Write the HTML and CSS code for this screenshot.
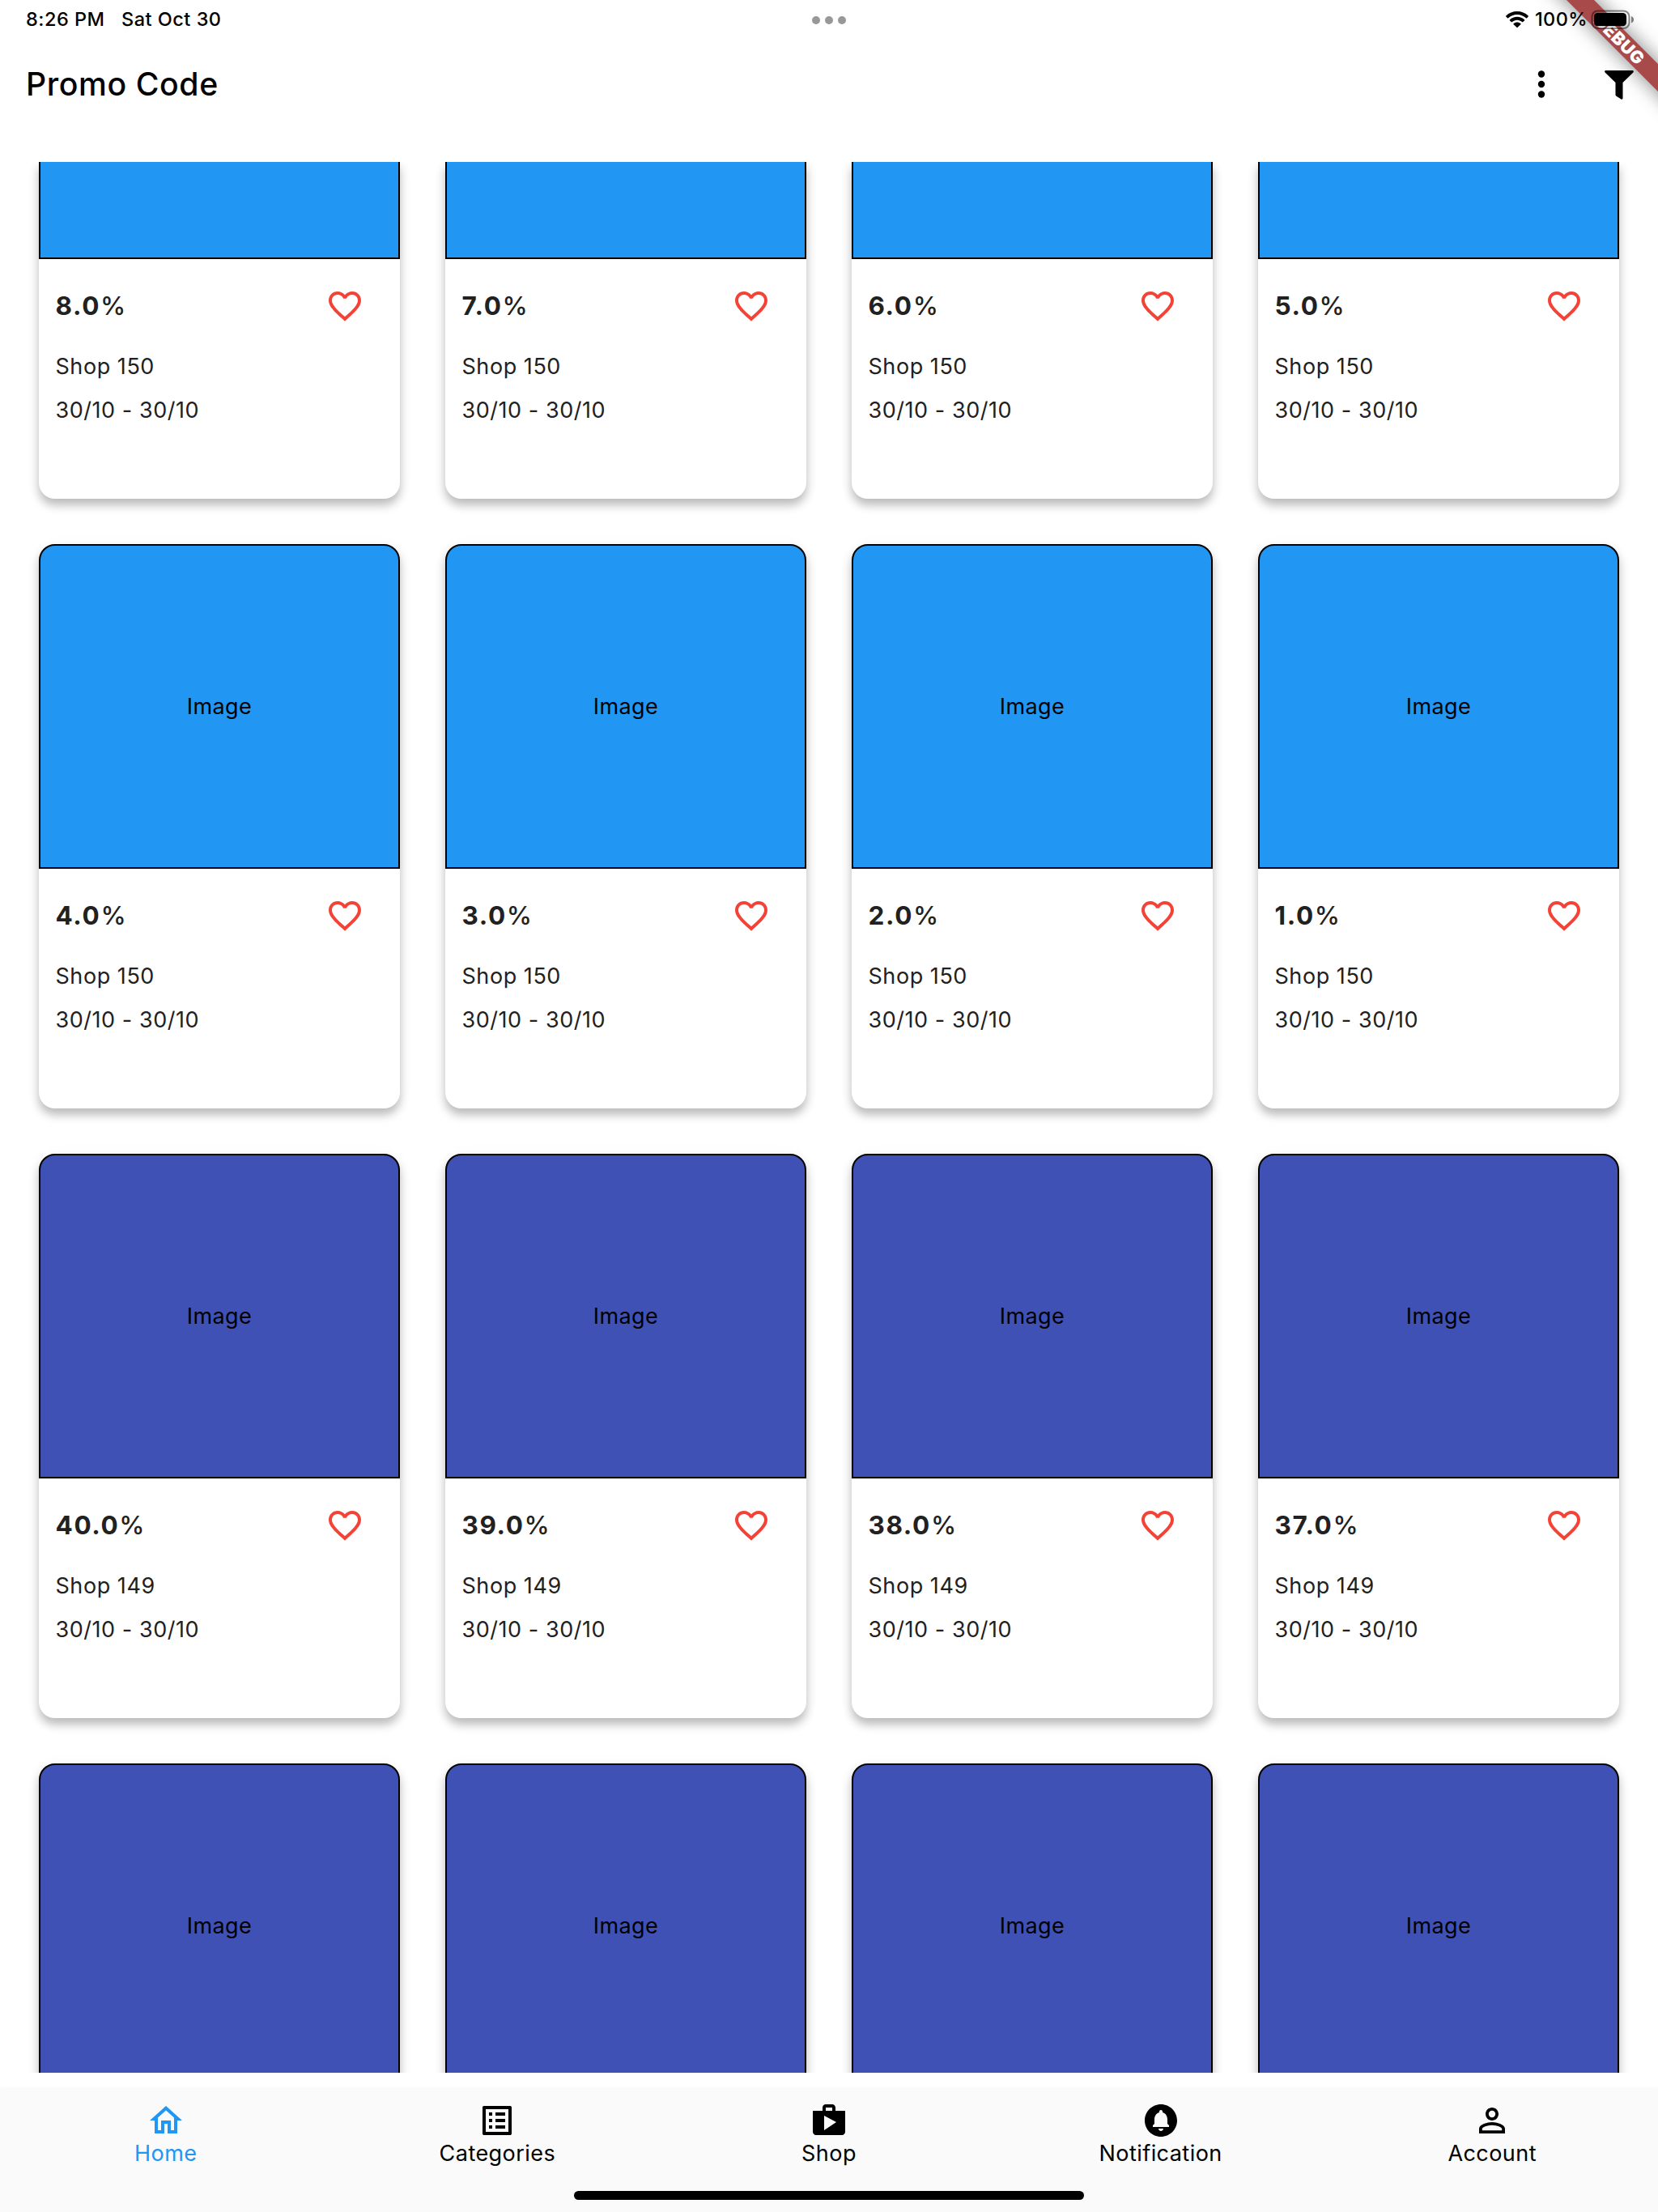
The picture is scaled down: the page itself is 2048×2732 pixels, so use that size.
FILE: index.html
```html
<!DOCTYPE html>
<html lang="en">
<head>
<meta charset="utf-8">
<title>Promo Code</title>
<link rel="stylesheet" href="styles.css">
</head>
<body>
<svg class="sprite" aria-hidden="true">
  <symbol id="heart" viewBox="0 0 24 24"><path d="M16.5 3c-1.74 0-3.41.81-4.5 2.09C10.91 3.81 9.24 3 7.5 3 4.42 3 2 5.42 2 8.5c0 3.78 3.4 6.86 8.55 11.54L12 21.35l1.45-1.32C18.6 15.36 22 12.28 22 8.5 22 5.42 19.58 3 16.5 3zm-4.4 15.55l-.1.1-.1-.1C7.14 14.24 4 11.39 4 8.5 4 6.5 5.5 5 7.5 5c1.54 0 3.04.99 3.57 2.36h1.87C13.46 5.99 14.96 5 16.5 5c2 0 3.5 1.5 3.5 3.5 0 2.89-3.14 5.74-7.9 10.05z"/></symbol>
</svg>
<div class="screen">
  <div class="banner"><span class="banner-label">DEBUG</span></div>
  <div class="status">
    <div class="status-left"><span class="clock">8:26 PM</span><span class="date">Sat Oct 30</span></div>
    <div class="multitask"><i></i><i></i><i></i></div>
    <div class="status-right">
      <svg class="wifi" viewBox="0 0 28 20"><path d="M14 0C8.700 0 3.900 2 .3 5.400c-.4.400-.4.800 0 1.200l1.600 1.600c.4.400.8.400 1.200 0C6 5.500 9.800 3.900 14 3.900s8 1.600 10.900 4.300c.4.400.8.400 1.200 0l1.600-1.600c.4-.4.4-.8 0-1.200C24.100 2 19.300 0 14 0z"/><path d="M14 6.800c-3.500 0-6.600 1.300-9 3.500-.4.400-.4.800 0 1.200l1.700 1.600c.4.400.8.400 1.200 0 1.600-1.500 3.700-2.400 6.100-2.400s4.500.9 6.100 2.400c.4.400.8.400 1.200 0l1.700-1.600c.4-.4.4-.8 0-1.200-2.400-2.200-5.500-3.500-9-3.500z"/><path d="M14 13.500c-1.700 0-3.200.6-4.300 1.600-.4.400-.4.800 0 1.200l3.700 3.400c.4.400.8.400 1.200 0l3.700-3.400c.4-.4.4-.8 0-1.200-1.100-1-2.600-1.600-4.300-1.600z"/></svg>
      <span class="percent">100%</span>
      <svg class="battery" viewBox="0 0 54 24"><rect x="1.500" y="1.500" width="46" height="21.500" rx="7" fill="none" stroke="#000" stroke-opacity=".45" stroke-width="2"/><rect x="4" y="4" width="40" height="16.300" rx="4.500"/><path d="M50 8v8.500c2-.7 3-2.300 3-4.250S52 8.700 50 8z" fill-opacity=".5"/></svg>
    </div>
  </div>
  <header class="appbar">
    <h1>Promo Code</h1>
    <div class="actions">
      <svg class="more" viewBox="0 0 50 50"><circle cx="25" cy="12.500" r="4.200"/><circle cx="25" cy="25" r="4.200"/><circle cx="25" cy="37.500" r="4.200"/></svg>
      <svg class="filter" viewBox="0 0 36 36"><path d="M1.500 0h33c1.300 0 1.800 1.500.9 2.400L22.500 15v19.500c0 1-1.200 1.500-2 .9l-6.300-4c-.5-.3-.7-.7-.7-1.300V15L.6 2.400C-.3 1.500.2 0 1.500 0z"/></svg>
    </div>
  </header>
  <main class="viewport">
    <div class="grid">
      <article class="card cut"><div class="picture"></div><div class="body"><div class="row"><b>8.0<i>%</i></b><svg><use href="#heart"/></svg></div><p>Shop 150</p><p>30/10 - 30/10</p></div></article>
      <article class="card cut"><div class="picture"></div><div class="body"><div class="row"><b>7.0<i>%</i></b><svg><use href="#heart"/></svg></div><p>Shop 150</p><p>30/10 - 30/10</p></div></article>
      <article class="card cut"><div class="picture"></div><div class="body"><div class="row"><b>6.0<i>%</i></b><svg><use href="#heart"/></svg></div><p>Shop 150</p><p>30/10 - 30/10</p></div></article>
      <article class="card cut"><div class="picture"></div><div class="body"><div class="row"><b>5.0<i>%</i></b><svg><use href="#heart"/></svg></div><p>Shop 150</p><p>30/10 - 30/10</p></div></article>

      <article class="card"><div class="picture">Image</div><div class="body"><div class="row"><b>4.0<i>%</i></b><svg><use href="#heart"/></svg></div><p>Shop 150</p><p>30/10 - 30/10</p></div></article>
      <article class="card"><div class="picture">Image</div><div class="body"><div class="row"><b>3.0<i>%</i></b><svg><use href="#heart"/></svg></div><p>Shop 150</p><p>30/10 - 30/10</p></div></article>
      <article class="card"><div class="picture">Image</div><div class="body"><div class="row"><b>2.0<i>%</i></b><svg><use href="#heart"/></svg></div><p>Shop 150</p><p>30/10 - 30/10</p></div></article>
      <article class="card"><div class="picture">Image</div><div class="body"><div class="row"><b>1.0<i>%</i></b><svg><use href="#heart"/></svg></div><p>Shop 150</p><p>30/10 - 30/10</p></div></article>

      <article class="card indigo"><div class="picture">Image</div><div class="body"><div class="row"><b>40.0<i>%</i></b><svg><use href="#heart"/></svg></div><p>Shop 149</p><p>30/10 - 30/10</p></div></article>
      <article class="card indigo"><div class="picture">Image</div><div class="body"><div class="row"><b>39.0<i>%</i></b><svg><use href="#heart"/></svg></div><p>Shop 149</p><p>30/10 - 30/10</p></div></article>
      <article class="card indigo"><div class="picture">Image</div><div class="body"><div class="row"><b>38.0<i>%</i></b><svg><use href="#heart"/></svg></div><p>Shop 149</p><p>30/10 - 30/10</p></div></article>
      <article class="card indigo"><div class="picture">Image</div><div class="body"><div class="row"><b>37.0<i>%</i></b><svg><use href="#heart"/></svg></div><p>Shop 149</p><p>30/10 - 30/10</p></div></article>

      <article class="card indigo"><div class="picture">Image</div></article>
      <article class="card indigo"><div class="picture">Image</div></article>
      <article class="card indigo"><div class="picture">Image</div></article>
      <article class="card indigo"><div class="picture">Image</div></article>
    </div>
  </main>
  <nav class="tabs">
    <a class="tab active"><svg viewBox="0 0 24 24"><path d="M12 5.690l5 4.500V18h-2v-6H9v6H7v-7.810l5-4.500M12 3L2 12h3v8h6v-6h2v6h6v-8h3L12 3z"/></svg><span>Home</span></a>
    <a class="tab"><svg viewBox="0 0 24 24"><path d="M19 5v14H5V5h14m1.100-2H3.900c-.5 0-.9.4-.9.900v16.200c0 .4.400.900.900.900h16.200c.4 0 .9-.5.900-.9V3.900c0-.5-.5-.9-.9-.9zM11 7h6v2h-6V7zm0 4h6v2h-6v-2zm0 4h6v2h-6zM7 7h2v2H7zm0 4h2v2H7zm0 4h2v2H7z"/></svg><span>Categories</span></a>
    <a class="tab"><svg viewBox="0 0 24 24"><path d="M16 6V4c0-1.110-.89-2-2-2h-4c-1.110 0-2 .89-2 2v2H2v13c0 1.110.89 2 2 2h16c1.110 0 2-.89 2-2V6h-6zm-6-2h4v2h-4V4zM9 18V9l7.500 4L9 18z"/></svg><span>Shop</span></a>
    <a class="tab"><svg viewBox="0 0 24 24"><path d="M12 2C6.480 2 2 6.480 2 12s4.480 10 10 10 10-4.480 10-10S17.520 2 12 2zm0 16.500c-.83 0-1.500-.67-1.500-1.500h3c0 .83-.67 1.500-1.500 1.500zm5-2.500H7v-1l1-1v-2.610C8 9.270 9.030 7.470 11 7v-.5c0-.57.430-1 1-1s1 .43 1 1V7c1.970.47 3 2.280 3 4.390V14l1 1v1z"/></svg><span>Notification</span></a>
    <a class="tab"><svg viewBox="0 0 24 24"><path d="M12 5.900a2.100 2.100 0 1 1 0 4.200 2.100 2.100 0 0 1 0-4.200m0 9c2.970 0 6.100 1.460 6.100 2.100v1.100H5.900V17c0-.64 3.130-2.100 6.100-2.100M12 4C9.790 4 8 5.790 8 8s1.790 4 4 4 4-1.790 4-4-1.790-4-4-4zm0 9c-2.670 0-8 1.340-8 4v3h16v-3c0-2.660-5.330-4-8-4z"/></svg><span>Account</span></a>
    <div class="home-indicator"></div>
  </nav>
</div>
</body>
</html>
```
FILE: styles.css
```css
* { box-sizing: border-box; }
body { margin: 0; background: #fff; font-family: Inter, "Liberation Sans", sans-serif; }
.sprite { display: none; }
svg { display: block; flex: none; }

.screen {
  position: relative;
  width: 2048px;
  height: 2732px;
  display: flex;
  flex-direction: column;
  overflow: hidden;
  background: #fff;
}

/* corner ribbon, lies under the status icons */
.banner {
  position: absolute;
  left: 1850px;
  top: 36px;
  width: 300px;
  height: 24px;
  transform: rotate(45deg);
  background: #a94a4a;
  box-shadow: 0 0 24px rgba(0, 0, 0, .5);
  display: flex;
  align-items: center;
  justify-content: center;
}
.banner-label { font-size: 21.500px; font-weight: 900; line-height: 24px; letter-spacing: .5px; padding-left: 2px; color: #fff; }

.status {
  position: relative;
  height: 48px;
  padding: 0 30px;
  display: grid;
  grid-template-columns: 1fr auto 1fr;
  font-size: 23.500px;
  font-weight: 500;
  line-height: 47px;
}
.status-left { display: flex; gap: 20.500px; padding-left: 2px; }
.clock, .date { letter-spacing: .5px; }
.multitask { display: flex; gap: 6px; padding-top: 20px; }
.multitask i { width: 10px; height: 10px; border-radius: 50%; background: #999; }
.status-right { display: flex; justify-content: flex-end; }
.wifi { width: 28px; height: 20px; margin: 14px 8px 0 0; }
.percent { letter-spacing: .4px; margin-right: 4px; }
.battery { width: 54px; height: 24px; margin: 12px -1px 0 0; }

.appbar {
  position: relative;
  height: 152px;
  padding: 0 30px 0 32px;
  display: flex;
  justify-content: space-between;
}
h1 { margin: 0; font-size: 39.200px; font-weight: 450; line-height: 111px; letter-spacing: .6px; }
.actions { display: flex; gap: 53px; }
.more { width: 50px; height: 50px; margin-top: 31px; }
.filter { width: 36px; height: 36px; margin-top: 38.500px; }

.viewport { height: 2360px; overflow: hidden; }
.grid {
  padding: 0 48px;
  display: grid;
  grid-template-columns: repeat(4, 446px);
  gap: 56px;
}
.card {
  height: 697px;
  border-radius: 20px;
  background: #fff;
  box-shadow: 0 8px 12px rgba(0, 0, 0, .25), 0 2px 20px rgba(0, 0, 0, .04);
}
.picture {
  height: 401px;
  border: 2px solid #000;
  border-radius: 20px 20px 0 0;
  background: #2196f3;
  display: flex;
  align-items: center;
  justify-content: center;
  font-size: 27px;
  letter-spacing: .4px;
}
.indigo .picture { background: #3f51b5; }
.cut { height: 416px; border-radius: 0 0 20px 20px; }
.cut .picture { height: 120px; border-top: 0; border-radius: 0; }
.body { padding: 11px 44px 0 20.500px; color: #212121; }
.row { height: 94px; display: flex; align-items: center; justify-content: space-between; }
.row b { font-size: 31.500px; font-weight: 700; line-height: 38px; letter-spacing: 1.600px; padding-bottom: 1px; }
.row b i { font-style: normal; font-weight: 500; }
.row svg { width: 48px; height: 48px; fill: #f44336; }
.body p { margin: 0; font-size: 27px; line-height: 54px; letter-spacing: .55px; }
.row + p { padding-top: 1px; }

.tabs {
  position: relative;
  height: 152px;
  margin-top: 20px;
  display: grid;
  grid-template-columns: repeat(5, 1fr);
  background: #fafafa;
  box-shadow: 0 0 6px rgba(0, 0, 0, .05);
}
.tab {
  padding-top: 15px;
  display: flex;
  flex-direction: column;
  align-items: center;
  font-size: 27px;
  line-height: 34px;
  letter-spacing: .45px;
  color: #000;
}
.tab svg { width: 48px; height: 48px; fill: currentColor; }
.active { color: #2196f3; }
.home-indicator {
  position: absolute;
  left: 709px;
  top: 126px;
  width: 630px;
  height: 11px;
  border-radius: 6px;
  background: #000;
}
```
